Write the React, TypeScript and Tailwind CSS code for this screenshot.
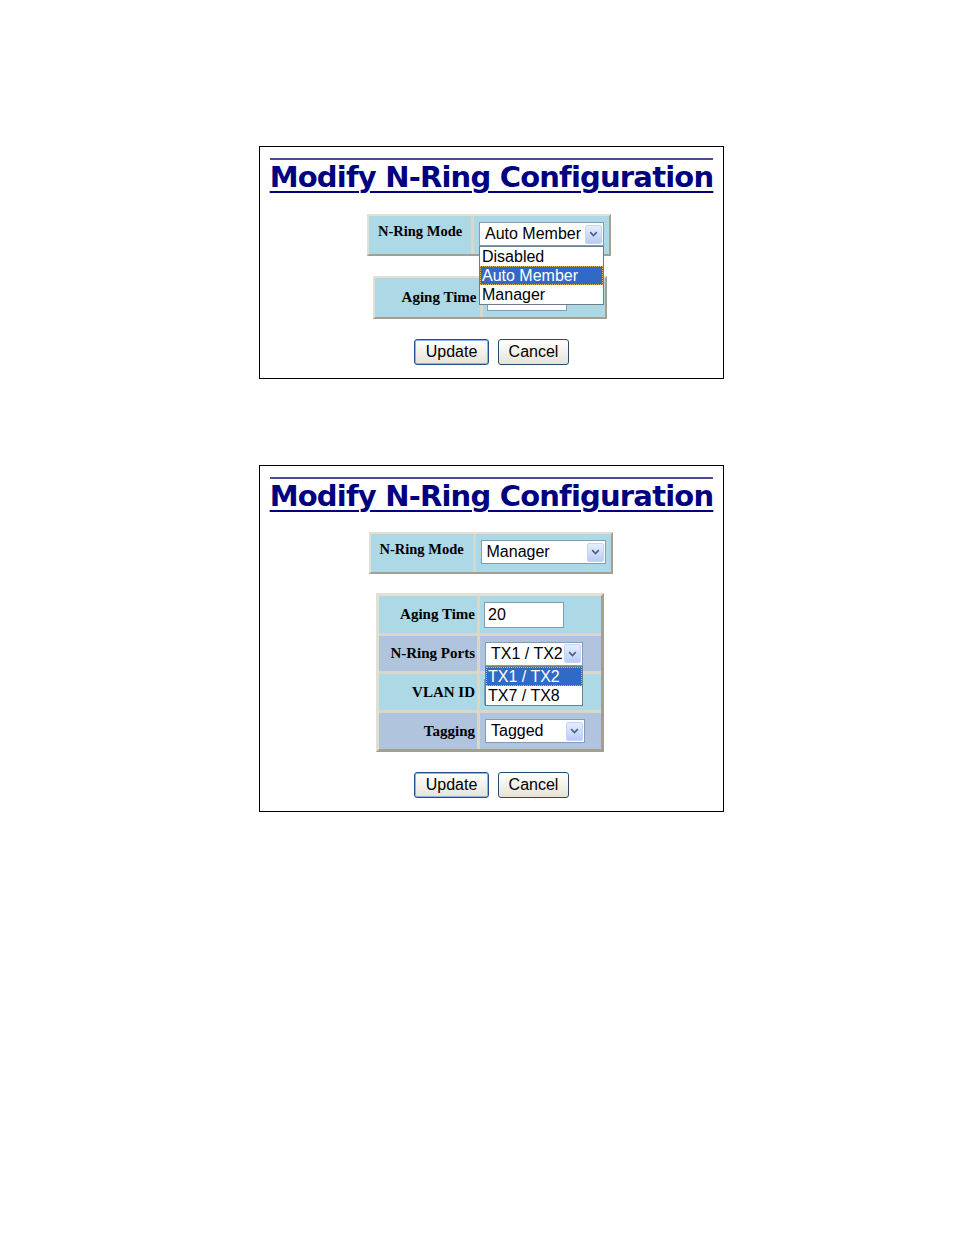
import React from 'react';

const SERIF = "font-['Liberation_Serif','Times_New_Roman',serif]";
const SANS = "font-['Liberation_Sans',Arial,sans-serif]";

function Chevron() {
  return (
    <span className="flex h-[19px] w-[17px] items-center justify-center rounded-[2px] border border-[#c3d3fd] bg-gradient-to-b from-[#e6eefc] to-[#b9ccf6]">
      <svg width="9" height="6" viewBox="0 0 9 6">
        <path d="M1.2 1.2l3.3 3.3 3.3-3.3" stroke="#4d6185" strokeWidth="1.7" fill="none" />
      </svg>
    </span>
  );
}

type SelectProps = {
  value: string;
  width: string;
  options?: string[];
  active?: string;
};

function Select({ value, width, options, active }: SelectProps) {
  return (
    <div className={`relative flex h-[24px] items-center border border-[#7f9db9] bg-white py-[1px] pr-[1px] pl-[5px] ${width}`}>
      <span className={`flex-1 text-[16px] leading-none text-black ${SANS}`}>{value}</span>
      <Chevron />
      {options && (
        <div className="absolute top-[calc(100%+1px)] -right-px -left-px z-10 border border-[#6d7d8c] bg-white">
          {options.map((o) => (
            <div
              key={o}
              className={`h-[19px] px-[2px] text-[16px] leading-[19px] ${SANS} ${
                o === active
                  ? 'bg-[#316ac5] text-white outline outline-1 -outline-offset-1 outline-dotted outline-[#d8b860]'
                  : 'text-black'
              }`}
            >
              {o}
            </div>
          ))}
        </div>
      )}
    </div>
  );
}

function TextBox({ value }: { value: string }) {
  return (
    <div className={`flex h-[26px] w-[80px] items-center border border-[#7f9db9] bg-white pl-[3px] text-[16px] text-black ${SANS}`}>
      {value}
    </div>
  );
}

function Title() {
  return (
    <div className="mt-[11px] flex flex-col">
      <div className="h-[2px] bg-[#4b4b8f]" />
      <h1
        className={`mt-[1px] text-[29px] leading-[32px] font-bold tracking-[-0.8px] whitespace-nowrap text-[#000080] underline decoration-2 underline-offset-[4px] font-['DejaVu_Sans',Verdana,sans-serif]`}
      >
        Modify N-Ring Configuration
      </h1>
    </div>
  );
}

function Frame({ children, className = '' }: { children: React.ReactNode; className?: string }) {
  return (
    <div
      className={`grid gap-[3px] border-[2px] border-t-[#e2dfd3] border-r-[#a39f93] border-b-[#a39f93] border-l-[#e2dfd3] bg-[#d9d6ca] ${className}`}
    >
      {children}
    </div>
  );
}

function Label({ text, bg }: { text: string; bg: string }) {
  return (
    <div className={`flex items-center justify-end pr-[2px] text-[15px] font-bold text-black ${SERIF} ${bg}`}>
      {text}
    </div>
  );
}

function Buttons() {
  return (
    <div className="flex gap-[9px]">
      <button className={`h-[26px] w-[75px] rounded-[3px] border border-[#1f4f8f] bg-gradient-to-b from-white to-[#e6e3d6] text-[16px] text-black shadow-[inset_0_0_0_1px_#8fb0e8] ${SANS}`}>
        Update
      </button>
      <button className={`h-[26px] w-[71px] rounded-[3px] border border-[#2b4a6f] bg-gradient-to-b from-white to-[#e6e3d6] text-[16px] text-black ${SANS}`}>
        Cancel
      </button>
    </div>
  );
}

function ModeTable({ value, options }: { value: string; options?: string[] }) {
  return (
    <Frame className="grid-cols-[102px_135px]">
      <div className={`h-[38px] pt-[5px] pl-[9px] text-[14.5px] font-bold text-black ${SERIF} bg-[#add8e6]`}>N-Ring Mode</div>
      <div className="bg-[#add8e6] pt-[6px] pl-[5px]">
        <Select value={value} width="w-[125px]" options={options} active={value} />
      </div>
    </Frame>
  );
}

function PanelOne() {
  return (
    <div className="flex w-[465px] flex-col items-center border border-black pb-[13px]">
      <Title />
      <div className="mt-[21px] -ml-[5px]">
        <ModeTable value="Auto Member" options={['Disabled', 'Auto Member', 'Manager']} />
      </div>
      <Frame className="mt-[20px] -ml-[4px] grid-cols-[105px_122px]">
        <Label text="Aging Time" bg="bg-[#add8e6] h-[39px] pr-[3px]" />
        <div className="flex items-center bg-[#add8e6] pl-[4px]">
          <TextBox value="" />
        </div>
      </Frame>
      <div className="mt-[20px]">
        <Buttons />
      </div>
    </div>
  );
}

function PanelTwo() {
  return (
    <div className="mt-[86px] flex w-[465px] flex-col items-center border border-black pb-[13px]">
      <Title />
      <div className="mt-[20px] -ml-[2px]">
        <ModeTable value="Manager" />
      </div>
      <Frame className="mt-[19px] -ml-[3px] grid-cols-[98px_121px] border-[3px]">
        <Label text="Aging Time" bg="bg-[#add8e6] h-[37px]" />
        <div className="flex items-center bg-[#add8e6] pl-[4px]">
          <TextBox value="20" />
        </div>
        <Label text="N-Ring Ports" bg="bg-[#b0c4de] h-[35px]" />
        <div className="relative z-10 flex items-center bg-[#b0c4de] pl-[5px]">
          <Select value="TX1 / TX2" width="w-[98px]" options={['TX1 / TX2', 'TX7 / TX8']} active="TX1 / TX2" />
        </div>
        <Label text="VLAN ID" bg="bg-[#add8e6] h-[36px]" />
        <div className="flex items-center bg-[#add8e6] pl-[4px]">
          <TextBox value="" />
        </div>
        <Label text="Tagging" bg="bg-[#b0c4de] h-[36px]" />
        <div className="flex items-center bg-[#b0c4de] pl-[5px]">
          <Select value="Tagged" width="w-[100px]" />
        </div>
      </Frame>
      <div className="mt-[20px]">
        <Buttons />
      </div>
    </div>
  );
}

export default function App() {
  return (
    <div className="min-h-[1235px] w-[954px] bg-white pt-[146px] pl-[259px]">
      <PanelOne />
      <PanelTwo />
    </div>
  );
}
